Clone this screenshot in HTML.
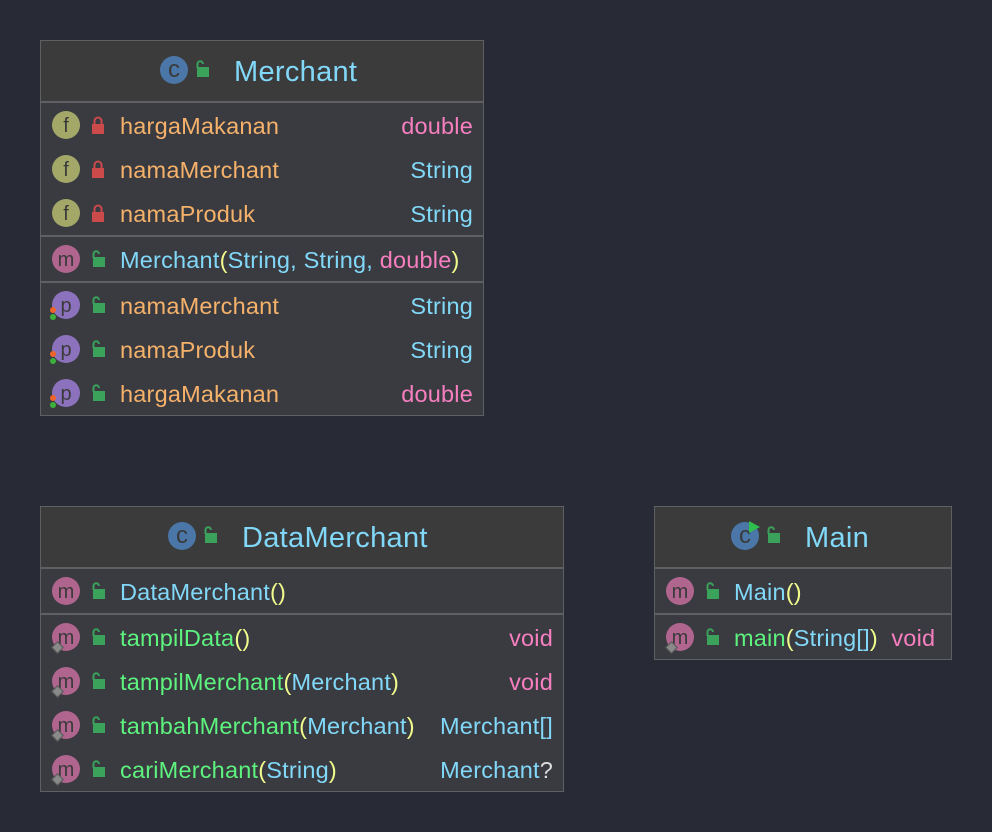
<!DOCTYPE html><html><head><style>
body{margin:0;width:992px;height:832px;background:#282a36;font-family:"Liberation Sans",sans-serif;position:relative;overflow:hidden}
.box{position:absolute;border:1px solid #5e6064;background:#393b40;box-sizing:border-box}
.hd{background:#3b3b3b;height:60px;border-bottom:2px solid #5e6064;position:relative}
.ttl{position:absolute;top:15px;font-size:29px;color:#82d8f8;letter-spacing:0.3px}
.sec{border-bottom:2px solid #5e6064}
.sec:last-child{border-bottom:none}
.row{height:44px;position:relative;font-size:23.5px;line-height:46px;letter-spacing:0.2px}
.ic{position:absolute;left:11px;top:8px;width:28px;height:28px;border-radius:50%;text-align:center;line-height:31px;font-size:20px;color:#3a3a3a;letter-spacing:0}
.f{background:#a3a869}.m{background:#b0658f}.p{background:#8c72bd}.c{background:#4a76a8}
.lk{position:absolute;left:48px;top:13px}
.nm{position:absolute;left:79px}
.tp{position:absolute;right:10px}
.o{color:#f6b26b}.cy{color:#82d8f8}.pk{color:#f77fc0}.g{color:#5ef27e}.y{color:#f1fa8c}.w{color:#dcdcdc}
.dot{position:absolute;width:6px;height:6px;border-radius:50%}
.dia{position:absolute;left:12px;top:28px;width:7px;height:7px;background:#8a8a8a;transform:rotate(45deg);border:1px solid #555}
</style></head><body>
<svg width="0" height="0" style="position:absolute"><defs>
<g id="ul"><rect x="4" y="7" width="12" height="10" fill="#3aa25a"/><path d="M4.5 8V4a2.7 2.7 0 0 1 5.4 0" stroke="#3aa25a" stroke-width="2" fill="none"/></g>
<g id="pl"><rect x="3" y="8" width="12" height="10" fill="#cc4a4a"/><path d="M5.5 9V5a3.5 3.5 0 0 1 7 0v4" stroke="#cc4a4a" stroke-width="2" fill="none"/></g>
</defs></svg>

<div class="box" style="left:40px;top:40px;width:444px;height:376px">
<div class="hd"><div class="ic c" style="left:119px;top:15px;font-size:24px;line-height:27px">c</div><svg class="lk" style="left:152px;top:19px" width="20" height="20"><use href="#ul"/></svg><div class="ttl" style="left:193px">Merchant</div></div>
<div class="sec"><div class="row"><div class="ic f">f</div><svg class="lk" width="20" height="20"><use href="#pl"/></svg><span class="nm o">hargaMakanan</span><span class="tp pk">double</span></div>
<div class="row"><div class="ic f">f</div><svg class="lk" width="20" height="20"><use href="#pl"/></svg><span class="nm o">namaMerchant</span><span class="tp cy">String</span></div>
<div class="row"><div class="ic f">f</div><svg class="lk" width="20" height="20"><use href="#pl"/></svg><span class="nm o">namaProduk</span><span class="tp cy">String</span></div></div>
<div class="sec"><div class="row"><div class="ic m">m</div><svg class="lk" width="20" height="20"><use href="#ul"/></svg><span class="nm cy">Merchant<span class="y">(</span>String, String, <span class="pk">double</span><span class="y">)</span></span></div></div>
<div class="sec">
<div class="row"><div class="ic p">p</div><div class="dot" style="left:9px;top:24px;background:#f0642a"></div><div class="dot" style="left:9px;top:31px;background:#3bb03b"></div><svg class="lk" width="20" height="20"><use href="#ul"/></svg><span class="nm o">namaMerchant</span><span class="tp cy">String</span></div>
<div class="row"><div class="ic p">p</div><div class="dot" style="left:9px;top:24px;background:#f0642a"></div><div class="dot" style="left:9px;top:31px;background:#3bb03b"></div><svg class="lk" width="20" height="20"><use href="#ul"/></svg><span class="nm o">namaProduk</span><span class="tp cy">String</span></div>
<div class="row"><div class="ic p">p</div><div class="dot" style="left:9px;top:24px;background:#f0642a"></div><div class="dot" style="left:9px;top:31px;background:#3bb03b"></div><svg class="lk" width="20" height="20"><use href="#ul"/></svg><span class="nm o">hargaMakanan</span><span class="tp pk">double</span></div>
</div></div>

<div class="box" style="left:40px;top:506px;width:524px;height:286px">
<div class="hd"><div class="ic c" style="left:127px;top:15px;font-size:24px;line-height:27px">c</div><svg class="lk" style="left:160px;top:19px" width="20" height="20"><use href="#ul"/></svg><div class="ttl" style="left:201px">DataMerchant</div></div>
<div class="sec"><div class="row"><div class="ic m">m</div><svg class="lk" width="20" height="20"><use href="#ul"/></svg><span class="nm cy">DataMerchant<span class="y">()</span></span></div></div>
<div class="sec">
<div class="row"><div class="ic m">m</div><div class="dia"></div><svg class="lk" width="20" height="20"><use href="#ul"/></svg><span class="nm g">tampilData<span class="y">()</span></span><span class="tp pk">void</span></div>
<div class="row"><div class="ic m">m</div><div class="dia"></div><svg class="lk" width="20" height="20"><use href="#ul"/></svg><span class="nm g">tampilMerchant<span class="y">(</span><span class="cy">Merchant</span><span class="y">)</span></span><span class="tp pk">void</span></div>
<div class="row"><div class="ic m">m</div><div class="dia"></div><svg class="lk" width="20" height="20"><use href="#ul"/></svg><span class="nm g">tambahMerchant<span class="y">(</span><span class="cy">Merchant</span><span class="y">)</span></span><span class="tp cy">Merchant[]</span></div>
<div class="row"><div class="ic m">m</div><div class="dia"></div><svg class="lk" width="20" height="20"><use href="#ul"/></svg><span class="nm g">cariMerchant<span class="y">(</span><span class="cy">String</span><span class="y">)</span></span><span class="tp cy">Merchant<span class="w">?</span></span></div>
</div></div>

<div class="box" style="left:654px;top:506px;width:298px;height:154px">
<div class="hd"><div class="ic c" style="left:76px;top:15px;font-size:24px;line-height:27px">c</div><svg style="position:absolute;left:93px;top:13px" width="14" height="14"><path d="M1 1L12 7L1 13Z" fill="#2fbf4f"/></svg><svg class="lk" style="left:109px;top:19px" width="20" height="20"><use href="#ul"/></svg><div class="ttl" style="left:150px">Main</div></div>
<div class="sec"><div class="row"><div class="ic m">m</div><svg class="lk" width="20" height="20"><use href="#ul"/></svg><span class="nm cy">Main<span class="y">()</span></span></div></div>
<div class="sec"><div class="row"><div class="ic m">m</div><div class="dia"></div><svg class="lk" width="20" height="20"><use href="#ul"/></svg><span class="nm g">main<span class="y">(</span><span class="cy">String[]</span><span class="y">)</span>&nbsp; <span class="pk">void</span></span></div></div>
</div>
</body></html>
